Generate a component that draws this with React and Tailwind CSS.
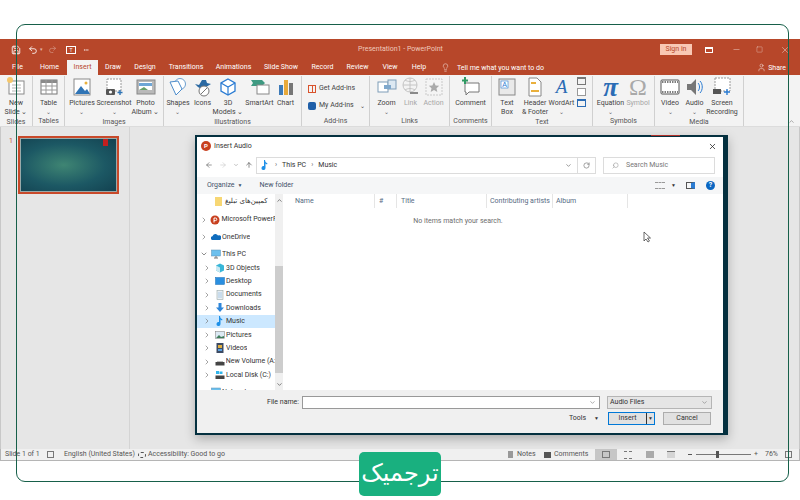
import { ChevronDown, ChevronRight, ChevronUp, Search, RotateCw, ArrowLeft, ArrowRight, ArrowUp, X, Minus, Square, Lightbulb, User, Undo2, Redo2, Save, MoreHorizontal } from 'lucide-react';

const tabs = [
    ['File', 'w-[29px]'],
    ['Home', 'w-[35px]'],
    ['Insert', 'w-[31px]'],
    ['Draw', 'w-[30px]'],
    ['Design', 'w-[34px]'],
    ['Transitions', 'w-[48px]'],
    ['Animations', 'w-[47px]'],
    ['Slide Show', 'w-[48px]'],
    ['Record', 'w-[35px]'],
    ['Review', 'w-[35px]'],
    ['View', 'w-[30px]'],
    ['Help', 'w-[28px]'],
];

// Small drawn icons for the ribbon
const Icon = ({ children }) => (
    <svg width="20" height="20" viewBox="0 0 20 20" className="shrink-0">
        {children}
    </svg>
);

const icons = {
    newSlide: (
        <Icon>
            <rect x="3" y="4" width="15" height="13" fill="#fff" stroke="#8a8a8a" />
            <path d="M6 8h9M6 11h9M6 14h9" stroke="#b5b5b5" />
            <circle cx="4" cy="3" r="3" fill="#f5c76b" />
        </Icon>
    ),
    table: (
        <Icon>
            <rect x="2" y="3" width="16" height="14" fill="#fff" stroke="#777" />
            <rect x="2" y="3" width="16" height="3" fill="#8a8a8a" />
            <path d="M2 9h16M2 13h16M7 3v14M13 3v14" stroke="#999" />
        </Icon>
    ),
    pictures: (
        <Icon>
            <rect x="2" y="2" width="16" height="16" fill="#fff" stroke="#8a8a8a" />
            <path d="M3 17l6-8 4 5 2-2 3 5z" fill="#2f74b5" />
            <circle cx="14" cy="6" r="1.5" fill="#eab03c" />
        </Icon>
    ),
    screenshot: (
        <Icon>
            <rect x="3" y="2" width="14" height="12" fill="#fff" stroke="#999" strokeDasharray="2 1" />
            <rect x="2" y="12" width="9" height="6" rx="1" fill="#555" />
            <circle cx="6.5" cy="15" r="1.6" fill="#fff" />
            <path d="M16 13v5M13.5 15.5h5" stroke="#2f74b5" strokeWidth="1.4" />
        </Icon>
    ),
    album: (
        <Icon>
            <rect x="1" y="3" width="18" height="14" fill="#b9b9b9" stroke="#888" />
            <rect x="3" y="5" width="13" height="8" fill="#fff" />
            <path d="M3 6h13v3H3z" fill="#6ea6d6" />
            <path d="M3 13l5-3 4 3z" fill="#68a06a" />
        </Icon>
    ),
    shapes: (
        <Icon>
            <circle cx="12" cy="7" r="5.5" fill="#fff" stroke="#6ea0d0" />
            <path d="M2 5l8-1 4 8-6 6z" fill="#fff" stroke="#4c8ccb" />
        </Icon>
    ),
    icons: (
        <Icon>
            <path d="M2 7l4 1 3-5 4 0 1 3 4 1-5 3-3 3-5-3z" fill="#2c6aa3" />
            <circle cx="11" cy="14" r="5" fill="#fff" stroke="#777" />
            <path d="M8 17l6-6" stroke="#777" />
        </Icon>
    ),
    models: (
        <Icon>
            <path d="M10 2l7 4v8l-7 4-7-4V6z" fill="#fff" stroke="#2b7cd3" strokeWidth="1.3" />
            <path d="M3 6l7 4 7-4M10 10v8" stroke="#2b7cd3" fill="none" strokeWidth="1.2" />
        </Icon>
    ),
    smartArt: (
        <Icon>
            <path d="M1 3h11l3 3-3 3H1l2-3z" fill="#3f9a82" />
            <rect x="7" y="8" width="12" height="9" fill="#fff" stroke="#888" />
        </Icon>
    ),
    chart: (
        <Icon>
            <rect x="3" y="8" width="4" height="10" fill="#3d7ab8" />
            <rect x="8" y="3" width="4" height="15" fill="#e8a93a" />
            <rect x="13" y="6" width="4" height="12" fill="#777" />
        </Icon>
    ),
    zoom: (
        <Icon>
            <rect x="1" y="5" width="10" height="10" fill="#fff" stroke="#7f9db8" />
            <rect x="11" y="3" width="8" height="9" fill="#dce8f2" stroke="#7f9db8" />
            <rect x="7" y="8" width="7" height="4" fill="#7fa8cc" />
        </Icon>
    ),
    link: (
        <Icon>
            <circle cx="9" cy="8" r="7" fill="none" stroke="#c4c4c4" />
            <path d="M2 8h14M9 1v14M4 3c3 2 7 2 10 0M4 13c3-2 7-2 10 0" stroke="#c4c4c4" fill="none" />
            <path d="M9 16h8" stroke="#8a8a8a" strokeWidth="2" />
        </Icon>
    ),
    action: (
        <Icon>
            <rect x="2" y="2" width="16" height="16" fill="#f4f4f4" stroke="#c9c9c9" strokeDasharray="2 1" />
            <path d="M10 5l1.6 3.4 3.6.4-2.7 2.5.8 3.7-3.3-1.9-3.3 1.9.8-3.7-2.7-2.5 3.6-.4z" fill="#aaa" />
        </Icon>
    ),
    comment: (
        <Icon>
            <path d="M4 6h14v9H8l-3 3v-3H4z" fill="#fff" stroke="#777" />
            <path d="M4 0v7M1 3.500h6" stroke="#2f9a63" strokeWidth="2" />
        </Icon>
    ),
    textBox: (
        <Icon>
            <rect x="2" y="2" width="16" height="16" fill="#e9e9e9" stroke="#888" />
            <rect x="4" y="4" width="7" height="7" fill="#fff" stroke="#2b7cd3" strokeWidth=".6" />
            <text x="5.200" y="10" fontSize="7" fill="#2b7cd3" fontFamily="Liberation Sans">A</text>
        </Icon>
    ),
    header: (
        <Icon>
            <path d="M4 1h8l4 4v14H4z" fill="#fff" stroke="#888" />
            <rect x="6" y="5" width="5" height="2" fill="#eab03c" />
            <rect x="6" y="13" width="8" height="2" fill="#eab03c" />
        </Icon>
    ),
    equation: (
        <span className="text-[27px] leading-[20px] text-[#2b6cb5] font-['Liberation_Serif',serif] italic font-bold">π</span>
    ),
    symbol: (
        <span className="text-[24px] leading-[20px] text-[#a9a9a9] font-['Liberation_Serif',serif]">Ω</span>
    ),
    video: (
        <Icon>
            <rect x="1" y="3" width="18" height="14" rx="1" fill="#fff" stroke="#555" />
            <path d="M2 5h16M2 15h16" stroke="#555" strokeWidth="1.5" strokeDasharray="1.500 1" />
        </Icon>
    ),
    audio: (
        <Icon>
            <path d="M2 7h4l5-5v16l-5-5H2z" fill="#777" />
            <path d="M13 6c2 2 2 6 0 8M15 4c3 3 3 9 0 12" stroke="#2b7cd3" fill="none" />
        </Icon>
    ),
    record: (
        <Icon>
            <rect x="3" y="1" width="15" height="13" fill="#fff" stroke="#999" strokeDasharray="2 1" />
            <rect x="1" y="12" width="8" height="5" fill="#555" />
            <path d="M15 12v6M12 15h6" stroke="#2b7cd3" strokeWidth="1.4" />
        </Icon>
    ),
};

const MiniIcon = ({ children }) => (
    <svg width="10" height="10" viewBox="0 0 10 10" className="shrink-0">
        {children}
    </svg>
);

// Icons of the dialog's navigation tree
const treeIcons = {
    ppt: (
        <MiniIcon>
            <circle cx="5" cy="5" r="4.500" fill="#c8401f" />
            <path d="M4 7.500V3h1.500a1.200 1.200 0 010 2.600H4" stroke="#fff" fill="none" />
        </MiniIcon>
    ),
    cloud: (
        <MiniIcon>
            <path d="M1 8a2 2 0 01.500-3.800A3 3 0 017 3.500 2.300 2.300 0 019 8z" fill="#0f6cbd" />
        </MiniIcon>
    ),
    pc: (
        <MiniIcon>
            <rect x=".5" y="1" width="9" height="6" fill="#6cc0ee" stroke="#5a8fb5" strokeWidth=".5" />
            <path d="M3 9h4M5 7v2" stroke="#777" />
        </MiniIcon>
    ),
    cube: (
        <MiniIcon>
            <path d="M5 .5l4 2v5l-4 2-4-2v-5z" fill="#38b6d8" />
            <path d="M5 4.500v5l-4-2v-5z" fill="#c8e9f3" />
        </MiniIcon>
    ),
    desktop: (
        <MiniIcon>
            <rect x=".5" y="1.500" width="9" height="7" fill="#2a8fe0" stroke="#1a6eb5" strokeWidth=".5" />
        </MiniIcon>
    ),
    doc: (
        <MiniIcon>
            <rect x="2" y=".5" width="6" height="9" fill="#e8eef3" stroke="#9aa" strokeWidth=".6" />
            <path d="M3 3h4M3 5h4M3 7h4" stroke="#6ea6d6" strokeWidth=".5" />
        </MiniIcon>
    ),
    download: (
        <MiniIcon>
            <path d="M3.500 0h3v4.500H9L5 9 1 4.500h2.500z" fill="#2f86d9" />
        </MiniIcon>
    ),
    music: (
        <MiniIcon>
            <path d="M4 0h1l.5 2 2 1.500-.500 1L5.500 3.500V8a2 2 0 11-1.500-1.900z" fill="#1e90e8" />
        </MiniIcon>
    ),
    picture: (
        <MiniIcon>
            <rect x=".5" y="1.500" width="9" height="7" fill="#dce9f4" stroke="#777" strokeWidth=".5" />
            <path d="M1 8l3-3 2 2 3-1v2z" fill="#3f7d5a" />
        </MiniIcon>
    ),
    video: (
        <MiniIcon>
            <rect x="1.500" y="0" width="7" height="10" fill="#3c4a63" />
            <rect x="3" y="2" width="4" height="3" fill="#e0b040" />
            <rect x="3" y="6" width="4" height="2" fill="#5aa0e0" />
        </MiniIcon>
    ),
    drive: (
        <MiniIcon>
            <rect x=".5" y="5" width="9" height="3.500" fill="#444" />
            <rect x="2" y="4" width="6" height="1" fill="#bbb" />
        </MiniIcon>
    ),
    disk: (
        <MiniIcon>
            <rect x=".5" y="5.500" width="9" height="3.500" fill="#444" />
            <rect x="1" y="1" width="3" height="3" fill="#30b5ec" />
            <rect x="4.500" y="1.500" width="3" height="2.500" fill="#30b5ec" />
        </MiniIcon>
    ),
};

function RibbonItem({ icon, lines, caret, disabled, className }) {
    return (
        <div className={`flex flex-col items-center shrink-0 ${className}`}>
            <div className="h-[22px] flex items-center justify-center">{icons[icon]}</div>
            <div className={`mt-[1px] text-center leading-[9px] whitespace-nowrap ${disabled ? 'text-[#a6a6a6]' : ''}`}>
                {lines.map((line) => (
                    <div key={line} className="flex items-center justify-center gap-[2px]">
                        {line}
                    </div>
                ))}
                {caret && <div className="text-[6px] leading-[8px] text-[#666]">⌄</div>}
            </div>
        </div>
    );
}

function RibbonGroup({ label, className, children }) {
    return (
        <div className={`shrink-0 h-[50px] flex flex-col border-r border-[#d0d0d0] ${className}`}>
            <div className="flex-1 flex">{children}</div>
            <div className="h-[10px] leading-[10px] text-center text-[7px] text-[#555]">{label}</div>
        </div>
    );
}

const TreeRow = ({ label, icon, selected, chevron = 'right', indent = true }) => (
    <div className={`h-[13.400px] flex items-center shrink-0 ${selected ? 'bg-[#cce8ff]' : ''}`}>
        <div className={`flex items-center justify-center ${indent ? 'w-[18px] pl-[2px]' : 'w-[14px]'}`}>
            {chevron === 'right' && <ChevronRight size={8} color="#777" />}
            {chevron === 'down' && <ChevronDown size={8} color="#555" />}
        </div>
        {treeIcons[icon]}
        <span className="ml-[1px] whitespace-nowrap overflow-hidden">{label}</span>
    </div>
);

const columns = [
    ['Name', 'w-[92px] pl-[12px]'],
    ['#', 'w-[22px] pl-[4px]'],
    ['Title', 'w-[90px] pl-[4px]'],
    ['Contributing artists', 'w-[66px] pl-[3px]'],
    ['Album', 'w-[75px] pl-[3px]'],
];

function InsertDialog() {
    return (
        <div className="absolute left-[195px] top-[8px] w-[533px] h-[300px] bg-[#04303f] border-t-2 border-l-2 border-b-2 border-[#04303f] pr-[5px] shadow-[0_4px_10px_rgba(0,0,0,0.25)]">
            <div className="h-full bg-white flex flex-col">
                {/* Title bar */}
                <div className="h-[18px] flex items-center pl-[4px] pr-[6px] shrink-0">
                    <span className="w-[10px] h-[10px] rounded-full bg-[#c8401f] text-white text-[6px] leading-[10px] text-center font-bold">P</span>
                    <span className="ml-[3px] text-[7px] text-[#333]">Insert Audio</span>
                    <X size={9} color="#222" className="ml-auto" />
                </div>
                {/* Address row */}
                <div className="h-[20px] flex items-center shrink-0">
                    <div className="w-[59px] flex items-center gap-[6px] pl-[8px]">
                        <ArrowLeft size={8} color="#666" />
                        <ArrowRight size={8} color="#ccc" />
                        <ChevronDown size={6} color="#888" />
                        <ArrowUp size={8} color="#555" />
                    </div>
                    <div className="w-[340px] h-[17px] border border-[#dcdcdc] flex items-center pl-[3px] text-[7px] text-[#333]">
                        {treeIcons.music}
                        <span className="mx-[5px] text-[#666]">›</span>
                        This PC
                        <span className="mx-[5px] text-[#666]">›</span>
                        Music
                        <ChevronDown size={7} color="#555" className="ml-auto mr-[5px]" />
                        <span className="w-[18px] h-full border-l border-[#dcdcdc] flex items-center justify-center">
                            <RotateCw size={7} color="#666" />
                        </span>
                    </div>
                    <div className="w-[112px] h-[17px] ml-[7px] border border-[#dcdcdc] flex items-center pl-[8px] text-[7px] text-[#777]">
                        <Search size={7} color="#999" className="-scale-x-100" />
                        <span className="ml-[7px]">Search Music</span>
                    </div>
                </div>
                {/* Toolbar */}
                <div className="h-[17px] mt-[2px] bg-[#f5f6f7] flex items-center pl-[10px] pr-[8px] text-[7px] text-[#3f5269] shrink-0">
                    <span>Organize</span>
                    <span className="ml-[3px] text-[5px]">▼</span>
                    <span className="ml-[17px]">New folder</span>
                    <div className="ml-auto flex items-center">
                        <span className="w-[10px] h-[7px] border-y border-dashed border-[#999]" />
                        <span className="ml-[6px] text-[5px] text-[#333]">▼</span>
                        <span className="ml-[10px] w-[9px] h-[7px] border border-[#555] border-r-[4px] border-r-[#2b7cd3]" />
                        <span className="ml-[11px] w-[9px] h-[9px] rounded-full bg-[#0a66c2] text-white text-[7px] leading-[9px] text-center font-bold">?</span>
                    </div>
                </div>
                {/* Navigation pane and file list */}
                <div className="flex-1 flex min-h-0 text-[7px] text-[#333]">
                    <div className="w-[78px] shrink-0 pt-[1px] overflow-hidden flex flex-col">
                        <div className="h-[18px] pb-[5px] flex items-center pl-[18px] shrink-0">
                            <span className="w-[7px] h-[9px] mr-[3px] bg-[#f7d774] shrink-0" />
                            <span className="font-['DejaVu_Sans',sans-serif] text-[7px] whitespace-nowrap">کمپین‌های تبلیغ</span>
                        </div>
                        <TreeRow label="Microsoft PowerP" icon="ppt" indent={false} />
                        <div className="h-[4px] shrink-0" />
                        <TreeRow label="OneDrive" icon="cloud" indent={false} />
                        <div className="h-[4px] shrink-0" />
                        <TreeRow label="This PC" icon="pc" chevron="down" indent={false} />
                        <TreeRow label="3D Objects" icon="cube" />
                        <TreeRow label="Desktop" icon="desktop" />
                        <TreeRow label="Documents" icon="doc" />
                        <TreeRow label="Downloads" icon="download" />
                        <TreeRow label="Music" icon="music" selected />
                        <TreeRow label="Pictures" icon="picture" />
                        <TreeRow label="Videos" icon="video" />
                        <TreeRow label="New Volume (A:" icon="drive" />
                        <TreeRow label="Local Disk (C:)" icon="disk" />
                        <div className="h-[4px] shrink-0" />
                        <TreeRow label="Network" icon="pc" chevron="none" indent={false} />
                    </div>
                    <div className="w-[8px] shrink-0 bg-[#f0f0f0] flex flex-col">
                        <ChevronUp size={7} color="#333" className="mt-[3px] mb-[62px] mx-auto" />
                        <div className="h-[107px] bg-[#cdcdcd]" />
                        <ChevronDown size={7} color="#333" className="mt-[8px] mx-auto" />
                    </div>
                    <div className="flex-1 flex flex-col text-[#566b83]">
                        <div className="flex h-[14px] items-center">
                            {columns.map(([name, width]) => (
                                <span key={name} className={`${width} h-full leading-[14px] whitespace-nowrap border-r border-[#e5e5e5]`}>
                                    {name}
                                </span>
                            ))}
                        </div>
                        <div className="mt-[8px] pr-[90px] text-center text-[#6d6d6d]">No items match your search.</div>
                    </div>
                </div>
                {/* Footer */}
                <div className="h-[43px] bg-[#f0f0f0] shrink-0 pr-[8px] text-[7px] text-[#333]">
                    <div className="flex items-center pt-[6px] h-[19px]">
                        <span className="w-[102px] text-right">File name:</span>
                        <div className="ml-[3px] w-[298px] h-[13px] bg-white border border-[#999] flex items-center justify-end pr-[3px]">
                            <ChevronDown size={7} color="#777" />
                        </div>
                        <div className="ml-[7px] w-[105px] h-[13px] bg-[#e5e5e5] border border-[#b5b5b5] flex items-center pl-[2px]">
                            Audio Files
                            <ChevronDown size={7} color="#777" className="ml-auto mr-[3px]" />
                        </div>
                    </div>
                    <div className="flex items-center justify-end mt-[3px] h-[13px]">
                        <span>Tools</span>
                        <span className="ml-[8px] mr-[9px] text-[5px]">▼</span>
                        <div className="w-[47px] h-[13px] bg-[#e1e1e1] border border-[#0078d7] flex">
                            <span className="flex-1 text-center leading-[11px]">Insert</span>
                            <span className="w-[8px] border-l border-[#333] text-[5px] leading-[10px] text-center">▼</span>
                        </div>
                        <div className="ml-[8px] mr-[4px] w-[48px] h-[13px] bg-[#e1e1e1] border border-[#adadad] text-center leading-[11px]">Cancel</div>
                    </div>
                </div>
            </div>
        </div>
    );
}

function App() {
    return (
        <div className="relative w-[800px] h-[500px] bg-white overflow-hidden pt-[39px] font-['Roboto',sans-serif]">
            {/* Title bar */}
            <div className="h-[21px] bg-[#b7472a] flex items-center text-white">
                <div className="w-[358px] flex items-center pl-[11px] shrink-0">
                    <Save size={10} />
                    <Undo2 size={10} className="ml-[7px]" />
                    <span className="text-[5px] ml-[2px] text-[#e3b5a6]">▾</span>
                    <Redo2 size={9} className="ml-[5px] opacity-40" />
                    <span className="ml-[9px] w-[10px] h-[8px] border border-white text-[5px] leading-[6px] text-center">T</span>
                    <MoreHorizontal size={6} className="ml-[7px]" />
                </div>
                <span className="w-[83px] text-[7px] whitespace-nowrap text-[#f0c9bb]">Presentation1 - PowerPoint</span>
                <div className="ml-[219px] w-[32px] h-[11px] bg-[#f9c8b4] text-[#b7472a] text-[7px] leading-[11px] text-center">Sign in</div>
                <span className="ml-[13px] w-[8px] h-[6px] border border-white border-t-2" />
                <Minus size={9} className="ml-[19px]" strokeWidth={1} />
                <Square size={7} className="ml-[15px]" strokeWidth={1} />
                <X size={10} className="ml-[17px]" strokeWidth={1} />
            </div>
            {/* Tabs */}
            <div className="h-[15px] bg-[#b7472a] flex items-end pl-[3px] text-[7px] text-white">
                {tabs.map(([tab, width]) => (
                    <div
                        key={tab}
                        className={`${width} h-[15px] leading-[14px] text-center shrink-0 ${tab === 'Insert' ? 'bg-[#f3f3f3] text-[#b7472a]' : ''}`}
                    >
                        {tab}
                    </div>
                ))}
                <Lightbulb size={9} className="ml-[8px] mb-[3px]" strokeWidth={1.2} />
                <span className="ml-[7px] leading-[14px]">Tell me what you want to do</span>
                <User size={9} className="ml-auto mb-[3px]" strokeWidth={1.2} />
                <span className="ml-[2px] mr-[14px] leading-[14px]">Share</span>
            </div>
            {/* Ribbon */}
            <div className="relative h-[52px] bg-[#f3f3f3] border-b border-[#dcdcdc] flex items-start pt-[1px] text-[7px] text-[#444]">
                <RibbonGroup label="Slides" className="w-[33px]">
                    <RibbonItem icon="newSlide" lines={['New', 'Slide ⌄']} className="w-[32px]" />
                </RibbonGroup>
                <RibbonGroup label="Tables" className="w-[32px]">
                    <RibbonItem icon="table" lines={['Table']} caret className="w-[31px]" />
                </RibbonGroup>
                <RibbonGroup label="Images" className="w-[99px]">
                    <RibbonItem icon="pictures" lines={['Pictures']} caret className="w-[34px]" />
                    <RibbonItem icon="screenshot" lines={['Screenshot']} caret className="w-[30px]" />
                    <RibbonItem icon="album" lines={['Photo', 'Album ⌄']} className="w-[33px]" />
                </RibbonGroup>
                <RibbonGroup label="Illustrations" className="w-[138px]">
                    <RibbonItem icon="shapes" lines={['Shapes']} caret className="w-[28px]" />
                    <RibbonItem icon="icons" lines={['Icons']} className="w-[21px]" />
                    <RibbonItem icon="models" lines={['3D', 'Models ⌄']} className="w-[30px]" />
                    <RibbonItem icon="smartArt" lines={['SmartArt']} className="w-[33px]" />
                    <RibbonItem icon="chart" lines={['Chart']} className="w-[19px]" />
                </RibbonGroup>
                <RibbonGroup label="Add-ins" className="w-[68px]">
                    <div className="pl-[6px] pt-[6px] flex flex-col gap-[4px]">
                        <div className="h-[13px] flex items-center gap-[3px]">
                            <span className="w-[8px] h-[8px] border border-[#d9532c] bg-[linear-gradient(#d9532c,#d9532c)] bg-[length:1px_100%] bg-center bg-no-repeat" />
                            <span>Get Add-ins</span>
                        </div>
                        <div className="h-[13px] flex items-center gap-[3px]">
                            <span className="w-[8px] h-[8px] rounded-[2px] bg-[#1f5fa8]" />
                            <span>My Add-ins</span>
                            <span className="ml-[3px] text-[6px]">⌄</span>
                        </div>
                    </div>
                </RibbonGroup>
                <RibbonGroup label="Links" className="w-[80px]">
                    <RibbonItem icon="zoom" lines={['Zoom']} caret className="w-[33px]" />
                    <RibbonItem icon="link" lines={['Link']} disabled className="w-[15px]" />
                    <RibbonItem icon="action" lines={['Action']} disabled className="w-[31px]" />
                </RibbonGroup>
                <RibbonGroup label="Comments" className="w-[42px]">
                    <RibbonItem icon="comment" lines={['Comment']} className="w-[41px]" />
                </RibbonGroup>
                <RibbonGroup label="Text" className="w-[101px]">
                    <RibbonItem icon="textBox" lines={['Text', 'Box']} className="w-[30px]" />
                    <RibbonItem icon="header" lines={['Header', '& Footer']} className="w-[26px]" />
                    <div className="w-[27px] flex flex-col items-center shrink-0">
                        <div className="h-[22px] text-[19px] leading-[22px] italic text-[#2b6cb5] font-['Liberation_Serif',serif]">A</div>
                        <div className="mt-[1px] leading-[9px]">WordArt</div>
                        <div className="text-[6px] leading-[8px] text-[#666]">⌄</div>
                    </div>
                    <div className="flex flex-col gap-[3px] pl-[2px] pt-[1px]">
                        <span className="w-[9px] h-[8px] border border-[#777] border-t-2" />
                        <span className="w-[9px] h-[8px] border border-[#999] bg-white" />
                        <span className="w-[9px] h-[8px] border border-[#2b6cb5] border-t-2" />
                    </div>
                </RibbonGroup>
                <RibbonGroup label="Symbols" className="w-[62px]">
                    <RibbonItem icon="equation" lines={['Equation']} caret className="w-[35px]" />
                    <RibbonItem icon="symbol" lines={['Symbol']} disabled className="w-[20px]" />
                </RibbonGroup>
                <RibbonGroup label="Media" className="w-[89px]">
                    <RibbonItem icon="video" lines={['Video']} caret className="w-[30px]" />
                    <RibbonItem icon="audio" lines={['Audio']} caret className="w-[19px]" />
                    <RibbonItem icon="record" lines={['Screen', 'Recording']} className="w-[36px]" />
                </RibbonGroup>
                <ChevronUp size={7} color="#777" className="absolute right-[5px] bottom-[1px]" />
            </div>
            {/* Slide panel and workspace */}
            <div className="h-[322px] bg-[#e6e6e6] flex border-x border-[#c8c8c8]">
                <div className="w-[129px] shrink-0 border-r border-[#d4d4d4] flex items-start pt-[9px] pl-[8px]">
                    <span className="w-[9px] text-[7px] leading-[10px] text-[#c8553a]">1</span>
                    <div className="w-[101px] h-[58px] border-2 border-[#c8492a] bg-[radial-gradient(ellipse_at_45%_50%,#3f8573,#1c5864_55%,#12404f)] outline outline-1 -outline-offset-3 outline-[#9aa]">
                        <div className="ml-[83px] w-[5px] h-[8px] bg-[#c21f1f]" />
                    </div>
                </div>
                <div className="relative flex-1 ml-[-130px]">
                    <InsertDialog />
                    <div className="absolute left-[651px] top-[8px] w-[29px] h-[1px] bg-[#b0312a]" />
                    {/* Mouse pointer */}
                    <svg width="9" height="12" viewBox="0 0 9 12" className="absolute left-[643px] top-[104px]">
                        <path d="M1 1v9l2-2 2 3 1.500-1-2-3h3z" fill="#fff" stroke="#444" strokeWidth=".8" />
                    </svg>
                </div>
            </div>
            {/* Status bar */}
            <div className="h-[12px] bg-[#f0f0f0] border-x border-b border-[#b5b5b5] flex items-center pl-[4px] text-[7px] whitespace-nowrap text-[#555]">
                <span className="w-[32px]">Slide 1 of 1</span>
                <span className="ml-[10px] w-[7px] h-[7px] border border-[#777]" />
                <span className="ml-[10px] w-[66px]">English (United States)</span>
                <span className="ml-[8px] w-[8px] h-[6px] border border-dashed border-[#555] rounded-full" />
                <span className="ml-[2px] w-[72px]">Accessibility: Good to go</span>
                <span className="ml-[288px] w-[5px] h-[7px] bg-[#999]" />
                <span className="ml-[4px] w-[16px]">Notes</span>
                <span className="ml-[11px] w-[7px] h-[6px] bg-[#555]" />
                <span className="ml-[3px] w-[30px]">Comments</span>
                <div className="ml-[11px] w-[22px] h-[11px] bg-[#c6c6c6] flex items-center justify-center">
                    <span className="w-[8px] h-[7px] border border-[#777]" />
                </div>
                <span className="ml-[7px] w-[8px] h-[8px] border-y border-dashed border-[#777]" />
                <span className="ml-[14px] w-[8px] h-[7px] bg-[#aaa]" />
                <span className="ml-[13px] w-[8px] h-[7px] border-t border-[#777] bg-[#d5d5d5]" />
                <span className="ml-[13px] w-[4px] h-px bg-[#555]" />
                <div className="ml-[4px] w-[55px] h-px bg-[#777] relative">
                    <span className="absolute left-[20px] -top-[3px] w-[3px] h-[7px] bg-[#555]" />
                </div>
                <span className="ml-[3px] text-[7px] leading-[7px]">+</span>
                <span className="ml-[7px]">76%</span>
                <span className="ml-[7px] w-[7px] h-[7px] border border-[#777]" />
            </div>
            {/* Green frame that lies over the screenshot */}
            <div className="absolute left-[16px] top-[24px] w-[773px] h-[458px] rounded-[9px] border border-[#17604a] pointer-events-none" />
            {/* Logo badge */}
            <div className="absolute left-[359px] top-[452px] w-[82px] h-[44px] rounded-[5px] bg-[#19b07f] text-white text-[24px] leading-[42px] text-center font-['DejaVu_Sans',sans-serif]">
                ترجمیک
            </div>
        </div>
    );
}

export default App;
